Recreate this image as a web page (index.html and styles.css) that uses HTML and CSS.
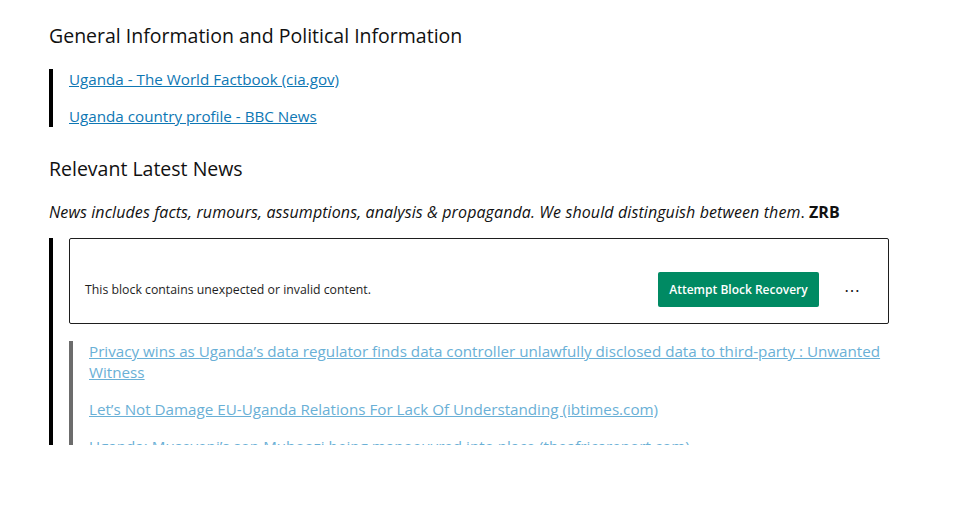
FILE: index.html
```html
<!DOCTYPE html>
<html>
<head>
<meta charset="utf-8">
<link rel="stylesheet" href="styles.css">
</head>
<body>
<div class="page">
  <h2 class="heading">General Information and Political Information</h2>
  <blockquote class="quote">
    <p class="item"><a class="link" href="#">Uganda - The World Factbook (cia.gov)</a></p>
    <p class="item"><a class="link" href="#">Uganda country profile - BBC News</a></p>
  </blockquote>
  <h2 class="heading heading-news">Relevant Latest News</h2>
  <p class="note"><em>News includes facts, rumours, assumptions, analysis &amp; propaganda. We should distinguish between them</em>. <strong>ZRB</strong></p>
  <blockquote class="quote quote-news">
    <div class="warning">
      <span class="warning-text">This block contains unexpected or invalid content.</span>
      <div class="warning-actions">
        <button class="recover">Attempt Block Recovery</button>
        <span class="more">⋯</span>
      </div>
    </div>
    <blockquote class="inner">
      <p class="item"><a class="link faded" href="#">Privacy wins as Uganda’s data regulator finds data controller unlawfully disclosed data to third-party : Unwanted Witness</a></p>
      <p class="item"><a class="link faded" href="#">Let’s Not Damage EU-Uganda Relations For Lack Of Understanding (ibtimes.com)</a></p>
      <p class="item"><a class="link faded" href="#">Uganda: Museveni’s son Muhoozi being manoeuvred into place (theafricareport.com)</a></p>
    </blockquote>
  </blockquote>
</div>
</body>
</html>
```
FILE: styles.css
```css
html, body {
  margin: 0;
  padding: 0;
  background: #fff;
}
body {
  font-family: "Open Sans", "Noto Sans", sans-serif;
  color: #1e1e1e;
  width: 979px;
  height: 530px;
  overflow: hidden;
}
.page {
  padding: 22px 0 0 49px;
  width: 840px;
}
.heading {
  font-size: 19.5px;
  font-weight: 400;
  margin: 0 0 19px;
  line-height: 28px;
  color: #111;
}
.heading-news {
  margin-top: 28px;
  margin-bottom: 18px;
}
.quote {
  margin: 0;
  border-left: 4px solid #000;
  padding-left: 16px;
}
.item {
  margin: 0;
  font-size: 15.2px;
  line-height: 21px;
  padding: 0;
}
.item + .item {
  margin-top: 16px;
}
.link {
  color: #0e77b4;
  text-decoration: underline;
}
.faded {
  color: #6ab0d6;
}
.note {
  margin: 0 0 15px;
  font-size: 16px;
  letter-spacing: 0.1px;
  line-height: 22px;
  color: #111;
}
.note strong {
  font-weight: 700;
  letter-spacing: 0;
  font-size: 16px;
}
.quote-news {
  height: 207px;
  overflow: hidden;
}
.warning {
  border: 1px solid #1e1e1e;
  border-radius: 2px;
  height: 86px;
  display: flex;
  align-items: flex-end;
  justify-content: space-between;
  padding: 0 24px 16px 15px;
  box-sizing: border-box;
}
.warning-text {
  font-size: 12.3px;
  line-height: 16px;
  color: #1e1e1e;
  padding-bottom: 9px;
}
.warning-actions {
  display: flex;
  align-items: center;
  gap: 25px;
}
.recover {
  background: #008a63;
  color: #fff;
  border: none;
  border-radius: 2px;
  font-family: inherit;
  font-size: 12px;
  font-weight: 600;
  height: 35px;
  width: 161px;
  padding: 0;
}
.more {
  font-size: 16px;
  color: #1e1e1e;
  width: 20px;
}
.inner {
  margin: 17px 0 0;
  border-left: 4px solid #6c6c6c;
  padding-left: 16px;
}
```
